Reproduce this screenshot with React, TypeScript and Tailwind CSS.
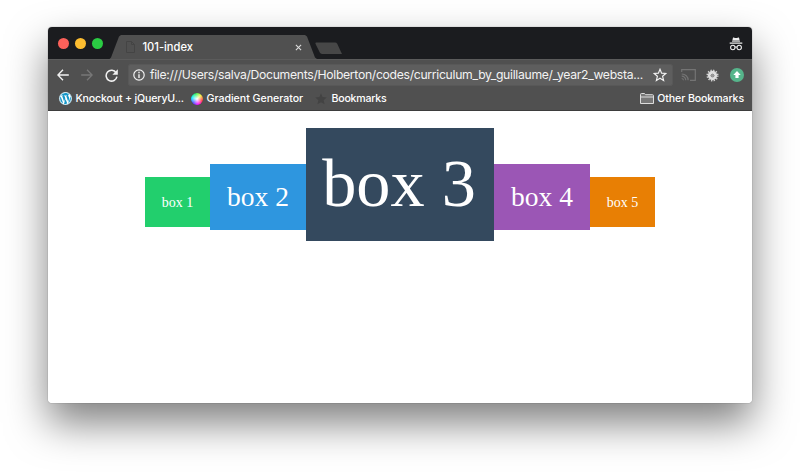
import React from "react";
import { FaWordpress } from "react-icons/fa";

function TabStrip() {
  return (
    <div className="flex h-8 items-end bg-[#1b1c1f]">
      <div className="flex h-8 w-[60px] items-center gap-[6.5px] pt-px pl-[10px]">
        <span className="size-[10.5px] shrink-0 rounded-full bg-[#fc615a]" />
        <span className="size-[10.5px] shrink-0 rounded-full bg-[#fdbd30]" />
        <span className="size-[10.5px] shrink-0 rounded-full bg-[#2acc43]" />
      </div>
      <div className="flex h-6 w-[209px] items-center bg-[#505050] pl-[18px] pr-[15px] [clip-path:polygon(1.5px_100%,3px_94%,11px_6%,13px_0,197px_0,199px_6%,207px_94%,209px_100%)]">
        <svg viewBox="0 0 9 12" className="h-3 w-[9px] shrink-0" fill="none" stroke="#444444">
          <path d="M.5.5h5l3 3v8h-8zM5.5.5v3h3" />
        </svg>
        <span className="ml-[7.5px] text-[11.2px] leading-4 font-medium tracking-[-0.03px]">101-index</span>
        <svg viewBox="0 0 8 8" className="ml-auto size-[7px]" stroke="#ddd" strokeWidth="1.2">
          <path d="M1 1l6 6M7 1L1 7" />
        </svg>
      </div>
      <div className="mb-[4px] -ml-[3px] h-[13px] w-7">
        <svg viewBox="0 0 28 13" className="h-[13px] w-7">
          <path d="M2 .5h19q1.5 0 2.2 1.3L28 12H8q-1.5 0-2.2-1.4L1.6 2Q1 .5 2 .5Z" fill="#474747" />
        </svg>
      </div>
      <svg viewBox="0 0 14 14" className="mr-[9px] mb-2 ml-auto size-[14px]" fill="none" stroke="#eee">
        <path d="M3 5l1-4.5c1 0 1.5.5 3 .5s2-.5 3-.5L11 5z" fill="#eee" stroke="none" />
        <path d="M3.2 4h7.6" stroke="#1b1c1f" strokeWidth=".7" />
        <path d="M.7 6.2h12.6" strokeWidth="1.2" />
        <circle cx="3.8" cy="10.5" r="2.2" strokeWidth="1.1" />
        <circle cx="10.2" cy="10.5" r="2.2" strokeWidth="1.1" />
        <path d="M6 10.2q1-.7 2 0" />
      </svg>
    </div>
  );
}

function Gear() {
  return (
    <svg viewBox="0 0 14 14" className="size-[13px]" fill="none">
      <circle cx="7" cy="7" r="5.7" stroke="#cfcfcf" strokeWidth="1.6" strokeDasharray="1.5 1.484" />
      <circle cx="7" cy="7" r="3.5" stroke="#dedede" strokeWidth="3" />
      <circle cx="7" cy="7" r="1.9" fill="#999" />
    </svg>
  );
}

function Toolbar() {
  return (
    <div className="flex h-[31px] items-center border-t border-[#5b5b5b] bg-[#505050] pl-[9px]">
      <svg viewBox="0 0 12 12" className="size-3" fill="none" stroke="#f1f1f1" strokeWidth="1.4">
        <path d="M11.8 6H1M6 .8L.9 6 6 11.2" />
      </svg>
      <svg viewBox="0 0 12 12" className="ml-3 size-3" fill="none" stroke="#777" strokeWidth="1.3">
        <path d="M.2 6H11M6 .8L11.1 6 6 11.2" />
      </svg>
      <svg viewBox="0 0 12 12" className="ml-3 size-[13px]" fill="none" stroke="#f1f1f1" strokeWidth="1.4">
        <path d="M10.3 3.5A5 5 0 1 0 11 7" />
        <path d="M11.8.2v5H6.8z" fill="#f1f1f1" stroke="none" />
      </svg>
      <div className="ml-[10px] flex h-[22px] w-[545px] items-center rounded-[2px] border border-[#585858] bg-[#5e5e5e] pl-1">
        <svg viewBox="0 0 12 12" className="size-3 shrink-0" fill="none" stroke="#f1f1f1" strokeWidth="1.2">
          <circle cx="6" cy="6" r="5.2" />
          <path d="M6 5.2V9M6 2.8v1.4" strokeWidth="1.4" />
        </svg>
        <span className="ml-[5px] w-[497px] shrink-0 whitespace-nowrap text-[12.2px] leading-5 tracking-[-0.3px] text-[#f3f3f3]">
          file:///Users/salva/Documents/Holberton/codes/curriculum_by_guillaume/_year2_websta...
        </span>
        <svg viewBox="0 0 14 14" className="ml-[6px] size-[14px] shrink-0" fill="none" stroke="#f1f1f1" strokeWidth="1.2">
          <path d="M7 1.3l1.6 3.9 4.2.3-3.2 2.8 1 4.1L7 10.2l-3.6 2.2 1-4.1-3.2-2.8 4.2-.3z" />
        </svg>
      </div>
      <svg viewBox="0 0 15 12" className="ml-2 h-3 w-[15px]" fill="none" stroke="#747474" strokeWidth="1.2">
        <path d="M.7 3V.7h13.6v10.6H9M.7 9.5a2 2 0 0 1 1.8 1.8M.7 7.2a4 4 0 0 1 4.1 4.1M.7 5a6.2 6.2 0 0 1 6.4 6.3" />
      </svg>
      <div className="ml-[10px]"><Gear /></div>
      <svg viewBox="0 0 14 14" className="ml-[11px] size-[14px]">
        <circle cx="7" cy="7" r="7" fill="#56b58b" />
        <path d="M7 3l3.7 3.9H8.6V10H5.4V6.9H3.3z" fill="white" />
      </svg>
    </div>
  );
}

function Bookmarks() {
  return (
    <div className="flex h-[21px] items-center border-b border-[#3d3d3d] bg-[#505050] pr-2 pb-[3px] pl-[10.5px] text-[10.6px] leading-4 font-medium whitespace-nowrap">
      <FaWordpress className="size-[13px] shrink-0 rounded-full bg-white text-[#1697c8]" />
      <span className="ml-1 w-[109px] tracking-[-0.17px]">Knockout + jQueryU...</span>
      <span className="ml-[6px] size-3 rounded-full bg-[radial-gradient(circle,white_0%,transparent_70%),conic-gradient(#ee3,#f33,#f0f,#44f,#0ef,#2e5,#ee3)] [rotate:45deg]" />
      <span className="ml-1 w-[97px] tracking-[-0.02px]">Gradient Generator</span>
      <svg viewBox="0 0 12 12" className="ml-[11px] size-3" fill="#434343">
        <path d="M6 .3l1.6 3.8 4.1.4-3.1 2.7 1 4.1L6 9.2l-3.6 2.1 1-4.1L.3 4.5l4.1-.4z" />
      </svg>
      <span className="ml-[5px] tracking-[-0.22px]">Bookmarks</span>
      <svg viewBox="0 0 14 11" className="ml-auto h-[11px] w-[14px]" fill="#777" stroke="#ddd">
        <path d="M.5 10.5v-9q0-1 1-1h3l1 1.2h7q1 0 1 1v7.8zM.5 4h13" />
      </svg>
      <span className="ml-[3px] tracking-[-0.1px]">Other Bookmarks</span>
    </div>
  );
}

export default function App() {
  return (
    <div className="h-[472px] w-[800px] overflow-hidden bg-white px-12 pt-[27px]">
      <div className="h-[376px] w-[704px] rounded-[4px] shadow-[0_0_1px_rgba(0,0,0,0.65),0_20px_40px_rgba(0,0,0,0.5)]">
        <div className="h-full overflow-hidden rounded-[4px] bg-white">
          <header className="font-['Inter',sans-serif] text-white">
            <TabStrip />
            <Toolbar />
            <Bookmarks />
          </header>
          <main className="flex items-center justify-center pt-[16.5px] font-['Liberation_Serif',serif] text-white">
            <div className="mt-[35px] flex h-[50px] w-[65px] items-center justify-center bg-[#22cf6d] pt-px text-[14px]">box 1</div>
            <div className="mt-[26px] flex h-[66px] w-24 items-center justify-center bg-[#2e96df] text-[27.5px]">box 2</div>
            <div className="flex h-[113px] w-[188px] items-center justify-center bg-[#34495e] pr-[2px] pb-[2px] text-[68.3px]">box 3</div>
            <div className="mt-[26px] flex h-[66px] w-24 items-center justify-center bg-[#9b56b5] text-[27.5px]">box 4</div>
            <div className="mt-[35px] flex h-[50px] w-[65px] items-center justify-center bg-[#e87f04] pt-px text-[14px]">box 5</div>
          </main>
        </div>
      </div>
    </div>
  );
}
